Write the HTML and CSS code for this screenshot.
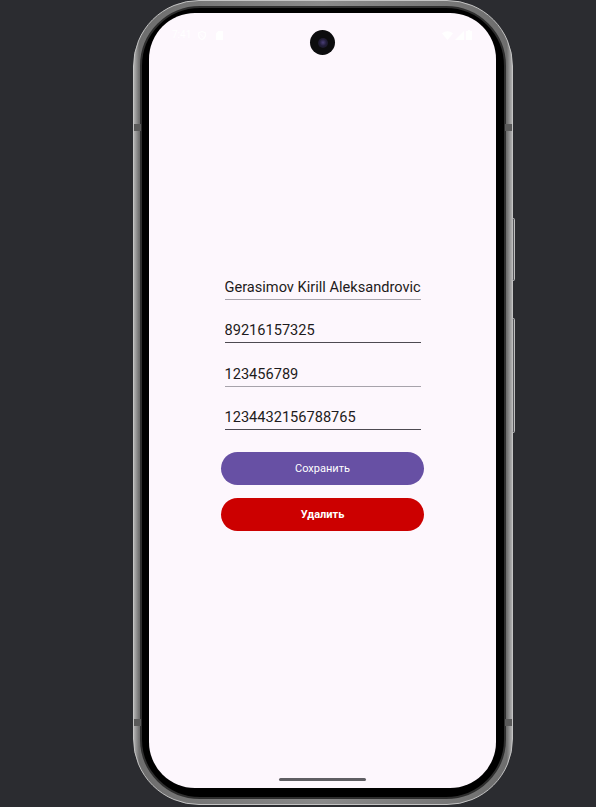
FILE: index.html
```html
<!DOCTYPE html>
<html lang="ru">
<head>
<meta charset="utf-8">
<title>Form</title>
<link rel="stylesheet" href="styles.css">
</head>
<body>
<div class="phone">
  <span class="band band-l-top"></span>
  <span class="band band-r-top"></span>
  <span class="band band-l-bot"></span>
  <span class="band band-r-bot"></span>
  <span class="side-btn side-btn-1"></span>
  <span class="side-btn side-btn-2"></span>
  <div class="bezel">
    <div class="screen">
      <div class="camera"><span class="lens"></span></div>
      <div class="status">
        <div class="status-left">
          <span class="time">7:41</span>
          <svg class="ic" width="8" height="9" viewBox="0 0 8 9"><path d="M4 0.6 L7.3 1.8 V4.4 C7.3 6.4 5.9 7.8 4 8.4 C2.1 7.8 0.7 6.4 0.7 4.4 V1.8 Z" fill="none" stroke="#fff" stroke-width="1.1"/><path d="M2 2.5 L6 6.8" stroke="#fff" stroke-width="1"/></svg>
          <svg class="ic ic-sd" width="7" height="9" viewBox="0 0 7 9"><path d="M2.2 0 H7 V9 H0 V2.2 Z" fill="#fff"/></svg>
        </div>
        <div class="status-right">
          <svg class="ic" width="11" height="9" viewBox="0 0 11 9"><path d="M0 2.4 C3 -0.6 8 -0.6 11 2.4 L5.5 9 Z" fill="#fff"/></svg>
          <svg class="ic" width="9" height="9" viewBox="0 0 9 9"><path d="M9 0 V9 H0 Z" fill="#fff"/></svg>
          <svg class="ic ic-bat" width="6" height="10" viewBox="0 0 6 10"><path d="M1.8 0 H4.2 V1 H6 V10 H0 V1 H1.8 Z" fill="#fff"/></svg>
        </div>
      </div>
      <div class="form">
        <div class="field field-light">Gerasimov Kirill Aleksandrovic</div>
        <div class="field">89216157325</div>
        <div class="field field-light">123456789</div>
        <div class="field">1234432156788765</div>
        <button class="btn btn-save">Сохранить</button>
        <button class="btn btn-delete">Удалить</button>
      </div>
      <div class="home-indicator"></div>
    </div>
  </div>
</div>
</body>
</html>
```

FILE: styles.css
```css
* { box-sizing: border-box; }

html, body {
  margin: 0;
  padding: 0;
  background: #2b2c30;
  font-family: Roboto, "Noto Sans", sans-serif;
}

body {
  width: 596px;
  height: 807px;
  overflow: hidden;
}

.phone {
  position: relative;
  margin-left: 133px;
  width: 380px;
  height: 805px;
  border-radius: 66px;
  border: 1px solid #c4c4c4;
  padding: 5px 6px;
  background: linear-gradient(90deg, #b0b0b0 0%, #6e6e6e 1.4%, #8a8a8a 50%, #6e6e6e 98.6%, #b0b0b0 100%);
}

.band {
  position: absolute;
  width: 7px;
  height: 7px;
  background: #5a5a5a;
}
.band-l-top { left: 0; top: 123px; }
.band-r-top { right: 0; top: 123px; }
.band-l-bot { left: 0; top: 718px; }
.band-r-bot { right: 0; top: 718px; }

.side-btn {
  position: absolute;
  left: 378px;
  width: 3px;
  border: 1px solid #bdbdbd;
  border-radius: 2px;
  background: #55565a;
}
.side-btn-1 { top: 217px; height: 63px; }
.side-btn-2 { top: 317px; height: 115px; }

.bezel {
  width: 100%;
  height: 100%;
  background: #000;
  border: 2px solid #2e2e2e;
  border-radius: 60px;
  padding: 5px 8px 9px 7px;
}

.screen {
  position: relative;
  width: 347px;
  height: 775px;
  background: #fdf7fd;
  border-radius: 46px;
  overflow: hidden;
  display: flex;
  flex-direction: column;
  align-items: center;
}

.camera {
  position: absolute;
  left: 161px;
  top: 17px;
  width: 25px;
  height: 25px;
  border-radius: 50%;
  background: #0c0c0e;
  display: flex;
  align-items: center;
  justify-content: center;
}
.lens {
  width: 10px;
  height: 10px;
  border-radius: 50%;
  background: radial-gradient(circle at 50% 45%, #4a3f78 0%, #221d3a 45%, #141418 100%);
}

.status {
  width: 100%;
  padding: 16px 24px 0 23px;
  height: 28px;
  display: flex;
  justify-content: space-between;
  align-items: flex-start;
  color: #fff;
  font-size: 10px;
  line-height: 12px;
}
.status-left, .status-right {
  display: flex;
  align-items: center;
  height: 12px;
}
.time { margin-right: 7px; }
.ic { display: block; }
.ic-sd { margin-left: 10px; }
.status-right .ic + .ic { margin-left: 2px; }
.status-right .ic-bat { margin-left: 8px; }

.form {
  margin-top: 236px;
  width: 203px;
  display: flex;
  flex-direction: column;
}

.field {
  margin: 0 3.5px 20.4px;
  font-size: 14.6px;
  line-height: 20px;
  color: #1d1b20;
  padding-bottom: 2px;
  border-bottom: 1px solid #4d4a52;
  white-space: nowrap;
  overflow: hidden;
}
.field-light { border-bottom-color: #a7a3ab; }
.field:last-of-type { margin-bottom: 22px; }

.btn {
  height: 33px;
  border: none;
  border-radius: 17px;
  color: #fff;
  font-family: Roboto, "Noto Sans", sans-serif;
  font-size: 11px;
  font-weight: 400;
  padding: 0;
}
.btn-save { background: #6750a4; }
.btn-delete {
  margin-top: 13px;
  background: #cc0000;
  font-weight: 700;
}

.home-indicator {
  margin-top: auto;
  margin-bottom: 7px;
  width: 87px;
  height: 3px;
  border-radius: 2px;
  background: #5f5e63;
}
```
